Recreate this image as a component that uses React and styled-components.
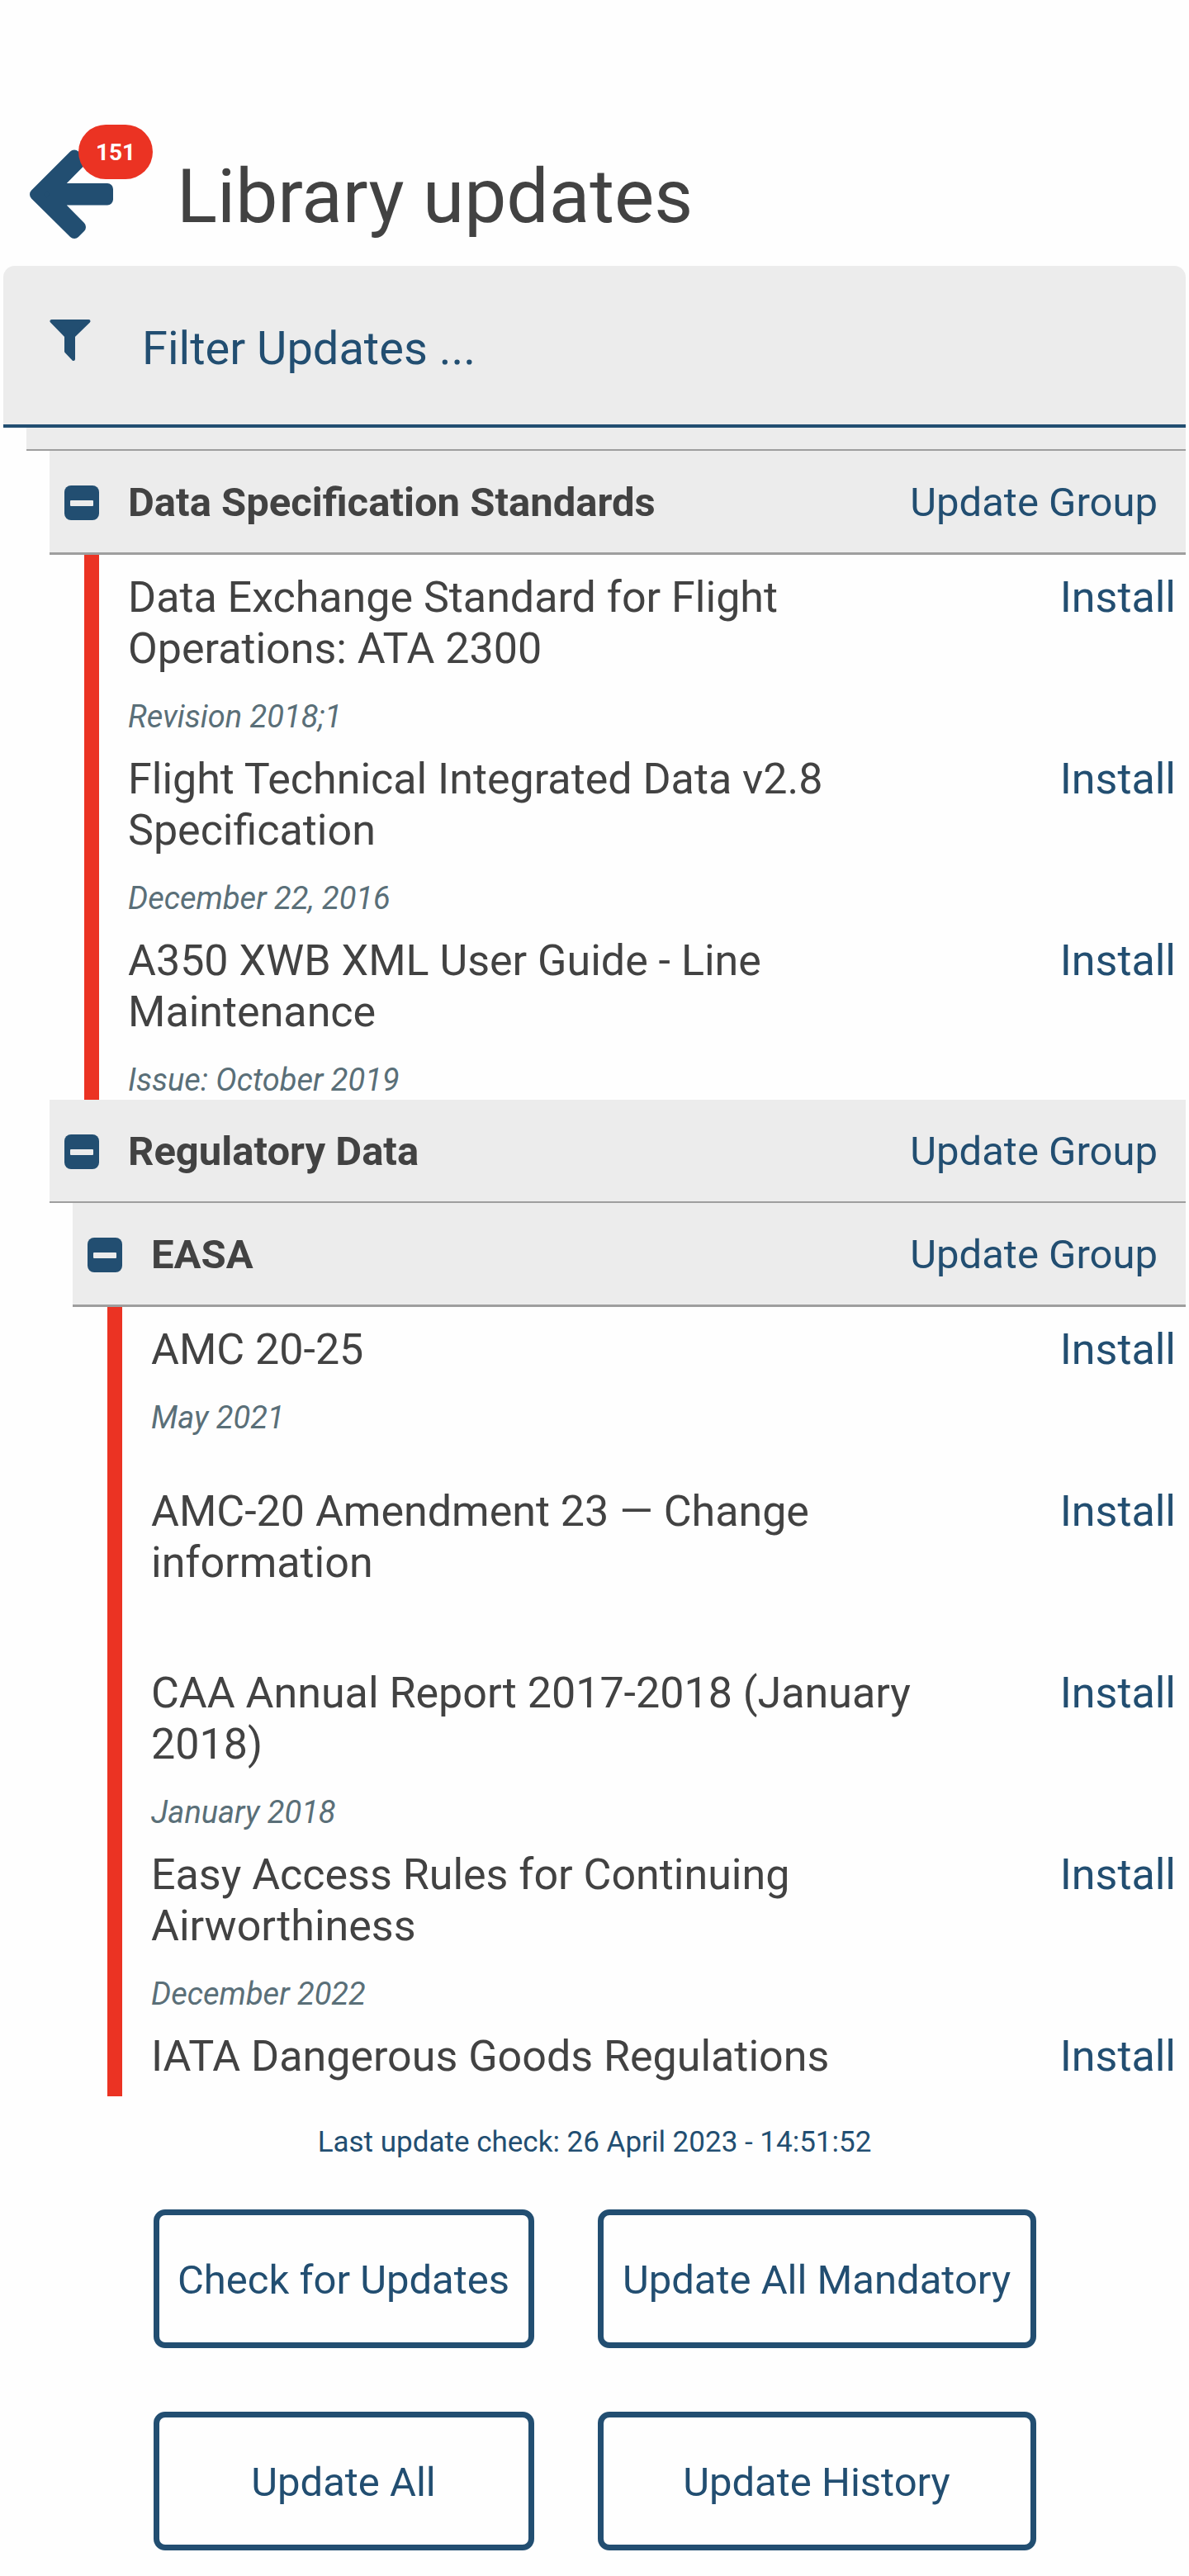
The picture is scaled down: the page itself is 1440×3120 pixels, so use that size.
import React from "react";
import styled, { createGlobalStyle } from "styled-components";

const navy = "#224e71";
const ink = "#424242";
const panel = "#ececec";

const GlobalStyle = createGlobalStyle`
  *, *::before, *::after { box-sizing: border-box; }
  body {
    margin: 0;
    background: #fefefe;
    color: ${ink};
    font-family: Roboto, "Noto Sans", sans-serif;
  }
  button { font: inherit; color: inherit; background: none; border: 0; padding: 0; cursor: pointer; }
  h1, h2, h3, p, ul { margin: 0; padding: 0; }
  ul { list-style: none; }
`;

const Screen = styled.div`
  display: flex;
  flex-direction: column;
  padding: 151px 4px 31px;
`;

const Header = styled.header`
  display: flex;
  gap: 74px;
  height: 171px;
  padding: 0 32px;
`;

const BackButton = styled.button`
  position: relative;
  width: 104px;
  height: 140px;
`;

const BackArrow = styled.svg`
  display: block;
  width: 104px;
  height: 112px;
  margin-top: 28px;
`;

const Badge = styled.span`
  position: absolute;
  top: 0;
  left: 59px;
  width: 90px;
  height: 66px;
  border-radius: 33px;
  background: #eb3323;
  color: #ffffff;
  font-size: 28px;
  line-height: 68px;
  font-weight: 700;
  text-align: center;
`;

const Title = styled.h1`
  padding-top: 33px;
  font-size: 91px;
  line-height: 108px;
  font-weight: 400;
`;

const FilterBar = styled.label`
  display: flex;
  gap: 62px;
  height: 196px;
  padding: 64px 56px 0;
  border-bottom: 4px solid ${navy};
  border-radius: 14px 14px 0 0;
  background: ${panel};
  color: ${navy};
`;

const FilterIcon = styled.svg`
  flex: none;
  width: 50px;
  height: 54px;
`;

const FilterInput = styled.input`
  flex: 1;
  height: 72px;
  padding: 0;
  border: 0;
  outline: 0;
  background: transparent;
  font: 400 56px/72px Roboto, "Noto Sans", sans-serif;
  color: ${navy};
  &::placeholder { color: ${navy}; opacity: 1; }
`;

const ClippedRow = styled.div`
  height: 28px;
  margin-left: 28px;
  border-bottom: 2px solid #9e9e9e;
  background: ${panel};
`;

const Group = styled.section`
  margin-left: ${(p) => (p.$nested ? 28 : 56)}px;
`;

const GroupBar = styled.header`
  display: flex;
  align-items: center;
  height: ${(p) => (p.$last ? 126 : 125)}px;
  padding: 2px 34px 0 18px;
  border-bottom: ${(p) => (p.$last ? 3 : 2)}px solid #9e9e9e;
  background: ${panel};
`;

const Toggle = styled.button`
  width: 42px;
  height: 44px;
  margin-right: 35px;
`;

const ToggleIcon = styled.svg`
  display: block;
  width: 42px;
  height: 42px;
`;

const GroupName = styled.h2`
  flex: 1;
  font-size: 49px;
  line-height: 60px;
  font-weight: 700;
`;

const GroupAction = styled.button`
  color: ${navy};
  font-size: 49px;
  line-height: 60px;
`;

const Items = styled.ul`
  margin-left: 42px;
  border-left: 18px solid #eb3323;
  padding-left: 35px;
`;

const Item = styled.li`
  display: flex;
  justify-content: space-between;
  align-items: flex-start;
  height: ${(p) => p.$height}px;
  padding: 21px 12px 0 0;
`;

const ItemText = styled.div`
  width: 960px;
`;

const ItemTitle = styled.h3`
  font-size: 52px;
  line-height: 62px;
  font-weight: 400;
`;

const ItemNote = styled.p`
  margin-top: 28px;
  color: #5a6f78;
  font-size: 38px;
  line-height: 46px;
  font-style: italic;
`;

const InstallButton = styled.button`
  flex: none;
  color: ${navy};
  font-size: 52px;
  line-height: 62px;
`;

const LastCheck = styled.p`
  padding: 34px 0 59px;
  color: ${navy};
  font-size: 35px;
  line-height: 44px;
  text-align: center;
`;

const Actions = styled.div`
  display: grid;
  grid-template-columns: 461px 531px;
  justify-content: center;
  gap: 77px;
`;

const ActionButton = styled.button`
  height: 168px;
  padding-top: 4px;
  border: 7px solid ${navy};
  border-radius: 14px;
  color: ${navy};
  font-size: 49px;
  line-height: 60px;
  white-space: nowrap;
`;

function CollapseToggle({ name }) {
  return (
    <Toggle type="button" aria-label={`Collapse ${name}`}>
      <ToggleIcon viewBox="0 0 42 42">
        <rect width="42" height="42" rx="8" fill={navy} />
        <rect x="7" y="18" width="28" height="7" rx="1" fill={panel} />
      </ToggleIcon>
    </Toggle>
  );
}

function GroupHeading({ name, last }) {
  return (
    <GroupBar $last={last}>
      <CollapseToggle name={name} />
      <GroupName>{name}</GroupName>
      <GroupAction type="button">Update Group</GroupAction>
    </GroupBar>
  );
}

function ItemList({ items }) {
  return (
    <Items>
      {items.map((item) => (
        <Item key={item.title} $height={item.height}>
          <ItemText>
            <ItemTitle>{item.title}</ItemTitle>
            {item.note && <ItemNote>{item.note}</ItemNote>}
          </ItemText>
          <InstallButton type="button">Install</InstallButton>
        </Item>
      ))}
    </Items>
  );
}

const standards = [
  { title: "Data Exchange Standard for Flight Operations: ATA 2300", note: "Revision 2018;1", height: 220 },
  { title: "Flight Technical Integrated Data v2.8 Specification", note: "December 22, 2016", height: 220 },
  { title: "A350 XWB XML User Guide - Line Maintenance", note: "Issue: October 2019", height: 220 },
];

const easa = [
  { title: "AMC 20-25", note: "May 2021", height: 196 },
  { title: "AMC-20 Amendment 23 — Change information", height: 220 },
  { title: "CAA Annual Report 2017-2018 (January 2018)", note: "January 2018", height: 220 },
  { title: "Easy Access Rules for Continuing Airworthiness", note: "December 2022", height: 220 },
  { title: "IATA Dangerous Goods Regulations", height: 100 },
];

export default function App() {
  return (
    <>
      <GlobalStyle />
      <Screen>
        <Header>
          <BackButton type="button" aria-label="Back, 151 updates">
            <BackArrow viewBox="0 0 104 112">
              <path
                d="M7 56.5L54 9.5L61 16.5L28 50H94V62.5H28L61 96L54 103Z"
                fill={navy}
                stroke={navy}
                strokeWidth="14"
                strokeLinejoin="round"
              />
            </BackArrow>
            <Badge>151</Badge>
          </BackButton>
          <Title>Library updates</Title>
        </Header>
        <FilterBar>
          <FilterIcon viewBox="0 0 50 54" aria-hidden="true">
            <path
              d="M2.5 3H47.5L29 21V49L20 39.5V21Z"
              fill={navy}
              stroke={navy}
              strokeWidth="4"
              strokeLinejoin="round"
            />
          </FilterIcon>
          <FilterInput type="text" aria-label="Filter updates" placeholder="Filter Updates ..." />
        </FilterBar>
        <main>
          <ClippedRow />
          <Group>
            <GroupHeading name="Data Specification Standards" last />
            <ItemList items={standards} />
          </Group>
          <Group>
            <GroupHeading name="Regulatory Data" />
            <Group $nested>
              <GroupHeading name="EASA" last />
              <ItemList items={easa} />
            </Group>
          </Group>
        </main>
        <footer>
          <LastCheck>Last update check: 26 April 2023 - 14:51:52</LastCheck>
          <Actions>
            <ActionButton type="button">Check for Updates</ActionButton>
            <ActionButton type="button">Update All Mandatory</ActionButton>
            <ActionButton type="button">Update All</ActionButton>
            <ActionButton type="button">Update History</ActionButton>
          </Actions>
        </footer>
      </Screen>
    </>
  );
}
